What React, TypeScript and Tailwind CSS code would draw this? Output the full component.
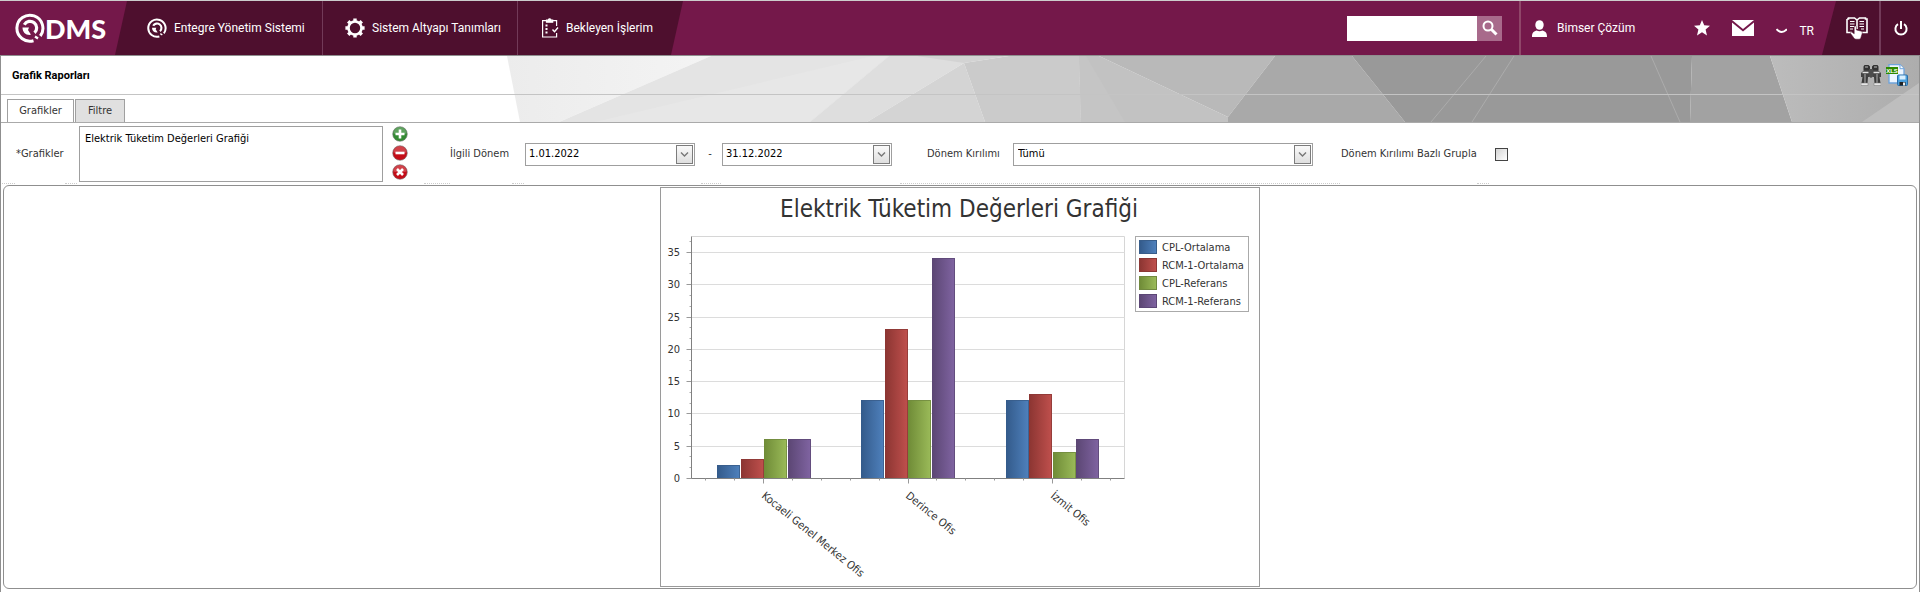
import React from 'react';

const series = [
  { name: 'CPL-Ortalama', from: '#335a8a', to: '#4f81bd', edge: '#385d8a', values: [2, 12, 12] },
  { name: 'RCM-1-Ortalama', from: '#8b3532', to: '#c0504d', edge: '#8c3836', values: [3, 23, 13] },
  { name: 'CPL-Referans', from: '#6f8b37', to: '#9bbb59', edge: '#71893f', values: [6, 12, 4] },
  { name: 'RCM-1-Referans', from: '#5b4673', to: '#8064a2', edge: '#5c4776', values: [6, 34, 6] },
];

const categories = ['Kocaeli Genel Merkez Ofis', 'Derince Ofis', 'İzmit Ofis'];

const plot = { left: 31, right: 464, top: 49, bottom: 291 };
const unit = 6.46;
const slot = (plot.right - plot.left) / categories.length;

const QMark = ({ className }: { className?: string }) => (
  <svg viewBox="0 0 30 30" className={className} fill="none" stroke="white">
    <path d="M18.500 27.700A13 13 0 1 1 25.300 23" strokeWidth="3" />
    <path d="M9.300 11.700A6.600 6.600 0 1 1 19.500 19.800" strokeWidth="3.200" />
    <path d="M7.500 14.500H14l-1 2.500 3 4.800C11 22.500 7.500 19.500 7.500 14.500z" fill="white" stroke="none" />
    <path d="M20 23.500l3 2" strokeWidth="2.200" />
  </svg>
);

const GearIcon = () => (
  <svg viewBox="0 0 20 20" className="h-5 w-5" fill="none" stroke="white">
    <circle cx="10" cy="10" r="6.500" strokeWidth="2.600" />
    {[0, 45, 90, 135, 180, 225, 270, 315].map((a) => (
      <path key={a} d="M8.300 .4h3.400v2.600h-3.400z" fill="white" stroke="none" transform={`rotate(${a} 10 10)`} />
    ))}
  </svg>
);

const TaskIcon = () => (
  <svg viewBox="0 0 18 20" className="h-5 w-[18px]" fill="none" stroke="white" strokeWidth="1.200">
    <path d="M5 2.600H1.600v16.400h14V15M15.600 8V2.600H12" />
    <path d="M5.500 2.200h1.700a1.400 1.400 0 0 1 2.800 0h1.700v2H5.500z" fill="white" />
    <path d="M4.500 7.500h2M4.500 11h2M4.500 14.500h2" strokeWidth="1.800" />
    <path d="M11.500 11.500l2 2.200L17 9.500" strokeWidth="1.400" />
  </svg>
);

const BookIcon = () => (
  <svg viewBox="0 0 22 23" className="h-[23px] w-[22px]">
    <path d="M1 2h1.500V1h6L11 3l2.500-2h6v1H21v13.500h-6M1 2v13.500h5M11 3v9" fill="none" stroke="white" strokeWidth="1.600" />
    <path d="M4 4.500h4.500M4 7h4.500M4 9.500h4.500M4 12h3M13.500 4.500H18M13.500 7H18M13.500 9.500H18M15 12h3" stroke="white" strokeWidth="1.200" />
    <path d="M8.200 10c0-1.500 2.200-1.500 2.200 0v3l5 1.200c1 .4.900 1.500.7 2.500l-1.100 3.500c-.3 1.500-1 2-2.500 2H10c-1.500 0-2-1-3-2.500L4.600 16.500c-.5-1.300.8-1.800 1.800-1l1.800 1.300z" fill="white" stroke="#4e0f2e" strokeWidth=".5" />
  </svg>
);

const BinocularsIcon = () => (
  <svg viewBox="0 0 20 21" className="h-[21px] w-5">
    <path d="M3.500 0h4l1.500 1.500v3.500H2.500v-3.500zM12.500 0h4l1 1.500V5H11V1.500z" fill="#333" />
    <path d="M4 2h3M13 2h3" stroke="#bbb" />
    <path d="M3 5h5.500v7H0V8zM11.500 5H17l3 3v4h-8.500z" fill="#444" />
    <path d="M8 4h4v7.500l-2 1.500-2-1.500z" fill="#4c4c4c" />
    <path d="M1.500 7.500h6M12.500 7.500h6" stroke="#e2e2e2" strokeWidth="1.400" />
    <path d="M1.500 12H7l-.5 6H.5zM13 12h5.500l1 6h-6z" fill="#3c3c3c" />
    <path d="M4 9v9M16 9v9" stroke="#999" strokeWidth="1.300" />
    <path d="M0 18h7v2.500H0zM13 18h7v2.500h-7z" fill="#e6e6e6" stroke="#777" strokeWidth=".5" />
  </svg>
);

const XlsIcon = () => (
  <svg viewBox="0 0 22 22" className="h-[22px] w-[22px]">
    <path d="M3 .7h11l4 4V19H3z" fill="#eef6ff" stroke="#6fa4dc" strokeWidth="1.300" />
    <path d="M14 .7v4h4" fill="#fff" stroke="#6fa4dc" />
    <rect x="0" y="3" width="12" height="7" fill="#2f8a00" />
    <text x="6" y="9" textAnchor="middle" fill="white" fontSize="6" fontWeight="700" fontFamily="Liberation Sans, sans-serif">XLS</text>
    <rect x="11.500" y="11" width="10" height="10.500" rx="1" fill="#4a9fdc" stroke="#2b6ea8" />
    <path d="M13.500 11.500h6v4h-6z" fill="#d8efff" />
    <path d="M13.500 18h6v3.500h-6z" fill="#222" />
    <path d="M17 18.500h2v3h-2z" fill="#eee" />
  </svg>
);

const RoundIcon = ({ color, path }: { color: string; path: string }) => (
  <svg viewBox="0 0 16 16" className="h-4 w-4">
    <circle cx="8" cy="8" r="7.300" fill={color} stroke="#777" strokeOpacity=".6" />
    <path d="M1.500 7.500a6.500 6.500 0 0 1 13 0q-6.500 2-13 0z" fill="white" fillOpacity=".22" />
    <path d={path} stroke="white" strokeWidth="2.600" />
  </svg>
);

const ArrowBox = () => (
  <svg viewBox="0 0 17 19" className="h-full w-[17px]">
    <defs>
      <linearGradient id="arrowFill" x2="0" y2="1">
        <stop stopColor="#fafafa" />
        <stop offset="1" stopColor="#dedede" />
      </linearGradient>
    </defs>
    <rect x=".5" y=".5" width="16" height="18" fill="url(#arrowFill)" stroke="#7c7c7c" />
    <path d="M5 7.500l3.500 3.500L12 7.500" fill="none" stroke="#777" strokeWidth="1.400" />
  </svg>
);

const HeaderPattern = () => (
  <svg
    viewBox="508 0 1412 66"
    preserveAspectRatio="xMaxYMin slice"
    className="absolute top-0 right-0 h-[66px] w-[1412px]"
    aria-hidden="true"
  >
    <defs>
      <linearGradient id="facetLight">
        <stop stopColor="#ececec" />
        <stop offset="1" stopColor="#f4f4f4" />
      </linearGradient>
      <linearGradient id="facetRight">
        <stop stopColor="#bcbcbc" />
        <stop offset="1" stopColor="#adadad" />
      </linearGradient>
    </defs>
    <path d="M508 0h204L560 66h-39z" fill="url(#facetLight)" />
    <path d="M712 0h178L811 66H560z" fill="#e4e4e4" />
    <path d="M874 0h16l-79 66H596z" fill="#e7e7e7" />
    <path d="M890 0h75v7l-97 59h-57z" fill="#dedede" />
    <path d="M918 0h92l-45 7z" fill="#d3d3d3" />
    <path d="M965 7l21 59H868z" fill="#d4d4d4" />
    <path d="M965 7l45-7h70l2 66h-96z" fill="#cbcbcb" />
    <path d="M1080 0h20l129 61v5h-147z" fill="#c2c2c2" />
    <path d="M1080 0h7l39 66h-44z" fill="#c5c5c5" />
    <path d="M1100 0h176l-47 61z" fill="#b9b9b9" />
    <path d="M1276 0h77l53 66h-177v-5z" fill="#a9a9a9" />
    <path d="M1353 0h340l-2 66h-285z" fill="#999" />
    <path d="M1693 0h78l22 66h-102z" fill="#a2a2a2" />
    <path d="M1771 0h149v66h-127z" fill="url(#facetRight)" />
    <path d="M1920 27v39h-57z" fill="#bebebe" />
    <path d="M1487 0l-55 66M1515 0l-42 66M1652 0l29 66" stroke="#acacac" />
  </svg>
);

const NavItem = ({ icon, label, className }: { icon: React.ReactNode; label: string; className: string }) => (
  <a href="#" className={`flex h-full items-center gap-[7px] text-xs text-white ${className}`}>
    {icon}
    {label}
  </a>
);

const DateBox = ({ label, value }: { label: string; value: string }) => (
  <div className="flex h-[23px] w-[170px] border border-[#9f9f9f] bg-white p-px">
    <input
      type="text"
      aria-label={label}
      defaultValue={value}
      className="min-w-0 flex-1 px-[2px] text-black outline-none"
    />
    <button type="button" aria-label="Takvim">
      <ArrowBox />
    </button>
  </div>
);

const Chart = () => {
  const y = (v: number) => Math.round(plot.bottom - v * unit);
  const minorY = Array.from({ length: 23 }, (_, i) => i).filter((i) => i % 3 !== 0);

  return (
    <svg
      viewBox="1 1 598 398"
      className="h-[400px] w-[600px] border border-[#9a9a9a] bg-white"
      fill="#333"
    >
      <defs>
        {series.map((s, i) => (
          <linearGradient key={s.name} id={`bar${i}`}>
            <stop stopColor={s.from} />
            <stop offset="1" stopColor={s.to} />
          </linearGradient>
        ))}
      </defs>

      <text x="299" y="30" fontSize="24" textAnchor="middle">
        Elektrik Tüketim Değerleri Grafiği
      </text>

      {/* Grid and value axis */}
      <g transform="translate(.5 .5)">
        <path d={`M${plot.left} ${plot.top}H${plot.right}V${plot.bottom}`} fill="none" stroke="#d6d6d6" />
        {[5, 10, 15, 20, 25, 30, 35].map((v) => (
          <path key={v} d={`M${plot.left} ${y(v)}H${plot.right}`} stroke="#dcdcdc" />
        ))}
        {[0, 5, 10, 15, 20, 25, 30, 35].map((v) => (
          <path key={v} d={`M${plot.left - 5} ${y(v)}h5`} stroke="#999" />
        ))}
        {minorY.map((i) => (
          <path key={i} d={`M${plot.left - 2} ${y((i * 5) / 3)}h2`} stroke="#aaa" />
        ))}
      </g>
      {[0, 5, 10, 15, 20, 25, 30, 35].map((v) => (
        <text key={v} x="20" y={y(v) + 4} textAnchor="end">
          {v}
        </text>
      ))}

      {/* Bars */}
      {categories.map((c, ci) =>
        series.map((s, si) => {
          const x = Math.round(57 + ci * slot + si * 23.5);
          const top = y(s.values[ci]);
          return (
            <g key={c + s.name}>
              <rect x={x} y={top} width="23" height={plot.bottom - top} fill={`url(#bar${si})`} />
              <path
                d={`M${x} ${top}h22v${plot.bottom - top}`}
                transform="translate(.5 .5)"
                fill="none"
                stroke={s.edge}
                strokeOpacity=".8"
              />
            </g>
          );
        }),
      )}

      {/* Category axis */}
      <g transform="translate(.5 .5)">
        <path d={`M${plot.left} ${plot.top}V${plot.bottom}H${plot.right}`} fill="none" stroke="#808080" />
        {Array.from({ length: 15 }, (_, i) => (
          <path
            key={i}
            d={`M${Math.round(plot.left + ((i + 0.5) * slot) / 5)} ${plot.bottom}v${i % 5 === 2 ? 5 : 2}`}
            stroke="#999"
          />
        ))}
      </g>
      {categories.map((c, i) => (
        <text key={c} transform={`translate(${Math.round(101 + i * slot)} 310) rotate(39)`}>
          {c}
        </text>
      ))}

      {/* Legend */}
      <rect x="475.5" y="49.5" width="113" height="75" fill="white" stroke="#aaa" />
      {series.map((s, i) => (
        <g key={s.name}>
          <rect x="479.5" y={53.5 + i * 18} width="17" height="13" fill={`url(#bar${i})`} stroke={s.edge} />
          <text x="502" y={64 + i * 18}>
            {s.name}
          </text>
        </g>
      ))}
    </svg>
  );
};

const App = () => {
  return (
    <div className="flex min-h-screen flex-col bg-white font-['DejaVu_Sans_Condensed','DejaVu_Sans',sans-serif] text-[11px] text-[#333]">
      {/* Top bar */}
      <header className="flex h-14 items-center border-t border-b border-t-[#ccc] border-b-[#8f8f8f] bg-[#74184a] font-['Roboto','Noto_Sans',sans-serif] text-white">
        <a href="#" aria-label="QDMS" className="flex w-[115px] items-center pl-[15px]">
          <QMark className="h-[30px] w-[30px]" />
          <span className="font-['Lato',sans-serif] text-[27px] leading-none font-black">DMS</span>
        </a>
        <nav className="flex h-full w-[568px] bg-[#4e0f2e] [clip-path:polygon(12px_0,100%_0,calc(100%-12px)_100%,0_100%)]">
          <NavItem icon={<QMark className="h-5 w-5" />} label="Entegre Yönetim Sistemi" className="w-[208px] border-r border-[#723a58] pl-8" />
          <NavItem icon={<GearIcon />} label="Sistem Altyapı Tanımları" className="w-[195px] border-r border-[#723a58] pl-[22px]" />
          <NavItem icon={<TaskIcon />} label="Bekleyen İşlerim" className="flex-1 pl-[23px]" />
        </nav>

        <div className="ml-auto flex h-full items-center">
          <form className="flex h-[25px]">
            <input type="search" aria-label="Ara" className="w-[130px] bg-white px-1 text-black outline-none" />
            <button type="button" aria-label="Ara" className="flex w-[25px] items-center justify-center bg-[#a86a8b]">
              <svg viewBox="0 0 16 16" className="h-4 w-4" fill="none" stroke="white">
                <circle cx="6" cy="6" r="4.500" strokeWidth="2" />
                <path d="M9.500 9.500l5 5" strokeWidth="3" />
              </svg>
            </button>
          </form>
          <div className="ml-[17px] flex h-full w-[175px] items-center gap-[10px] border-l-2 border-[#904669] pl-[11px] text-xs">
            <svg viewBox="0 0 15 17" className="h-[17px] w-[15px]" fill="white">
              <ellipse cx="7.500" cy="5" rx="4.200" ry="4.800" />
              <path d="M0 17c0-4 1-5.500 4.500-6.500q3 1.500 6 0C14 11.500 15 13 15 17z" />
            </svg>
            Bimser Çözüm
          </div>
          <button type="button" aria-label="Favoriler" className="w-4">
            <svg viewBox="0 0 16 16" className="h-4 w-4" fill="white">
              <path d="M8 0l2.200 5.300 5.800.5-4.400 3.800L13 15.500 8 12.300 3 15.500l1.400-5.900L0 5.800l5.800-.5z" />
            </svg>
          </button>
          <button type="button" aria-label="Mesajlar" className="ml-[22px]">
            <svg viewBox="0 0 22 16" className="h-4 w-[22px]" fill="white">
              <path d="M0 0h22L11 9zM0 2.500l11 9 11-9V16H0z" />
            </svg>
          </button>
          <button type="button" className="ml-[22px] flex w-[38px] items-center gap-3 pt-[5px] text-xs">
            <svg viewBox="0 0 12 6" className="h-[6px] w-3" fill="none" stroke="white" strokeWidth="2.200">
              <path d="M.5 1q5.500 6 11 0" />
            </svg>
            TR
          </button>
          <div className="ml-2 flex h-full w-[98px] bg-[#4e0f2e] [clip-path:polygon(14px_0,100%_0,100%_100%,0_100%)]">
            <button type="button" aria-label="Yardım" className="flex w-[59px] items-center justify-end border-r-2 border-[#723a58] pr-[11px]">
              <BookIcon />
            </button>
            <button type="button" aria-label="Çıkış" className="flex flex-1 items-center justify-center">
              <svg viewBox="0 0 14 15" className="h-[15px] w-[14px]" fill="none" stroke="white" strokeWidth="2">
                <path d="M4 3.200a5.600 5.600 0 1 0 6 0M7 0v8" />
              </svg>
            </button>
          </div>
        </div>
      </header>

      <main className="flex flex-1 flex-col border-r border-l border-[#8f8f8f]">
        {/* Title and tabs */}
        <div className="relative overflow-hidden border-b border-[#aaa]">
          <HeaderPattern />
          <div className="relative flex h-[39px] items-center justify-between border-b border-[#c4c4c4] pr-[11px] pl-[11px]">
            <h1 className="pt-[2px] font-['Roboto','Noto_Sans',sans-serif] font-bold text-black">Grafik Raporları</h1>
            <div className="flex gap-[5px]">
              <button type="button" aria-label="Ara">
                <BinocularsIcon />
              </button>
              <button type="button" aria-label="Excel">
                <XlsIcon />
              </button>
            </div>
          </div>
          <div className="relative flex h-[27px] items-end gap-px pl-[6px]">
            <button type="button" className="h-[23px] w-[67px] border border-b-0 border-[#a0a0a0] bg-white pt-px">
              Grafikler
            </button>
            <button type="button" className="h-[23px] w-[50px] border border-b-0 border-[#a0a0a0] bg-[#e0e0e0] pt-px">
              Filtre
            </button>
          </div>
        </div>

        {/* Filters */}
        <div className="flex h-[60px] items-center pt-[2px]">
          <label htmlFor="grafikler" className="w-[78px] pl-[15px]">
            *Grafikler
          </label>
          <select
            id="grafikler"
            size={3}
            className="h-[56px] w-[304px] border border-[#9f9f9f] bg-white px-1 py-[5px] text-black outline-none"
          >
            <option className="px-px">Elektrik Tüketim Değerleri Grafiği</option>
          </select>
          <div className="mb-[2px] ml-[9px] flex flex-col gap-[3px]">
            <button type="button" aria-label="Ekle">
              <RoundIcon color="#338a33" path="M8 3.500v9M3.500 8h9" />
            </button>
            <button type="button" aria-label="Çıkar">
              <RoundIcon color="#c40d18" path="M3.500 8h9" />
            </button>
            <button type="button" aria-label="Temizle">
              <RoundIcon color="#c40d18" path="M5 5l6 6M11 5l-6 6" />
            </button>
          </div>
          <span className="ml-[42px] w-[75px]">İlgili Dönem</span>
          <DateBox label="İlgili Dönem başlangıç" value="1.01.2022" />
          <span className="w-[27px] pl-[3px] text-center">-</span>
          <DateBox label="İlgili Dönem bitiş" value="31.12.2022" />
          <label htmlFor="kirilim" className="ml-[35px] w-[86px]">
            Dönem Kırılımı
          </label>
          <div className="relative h-[23px] w-[300px]">
            <select
              id="kirilim"
              className="h-full w-full appearance-none border border-[#9f9f9f] bg-white px-1 text-black outline-none"
            >
              <option>Tümü</option>
            </select>
            <span className="pointer-events-none absolute top-[2px] right-[2px] h-[19px]">
              <ArrowBox />
            </span>
          </div>
          <label htmlFor="grupla" className="ml-7 w-[154px]">
            Dönem Kırılımı Bazlı Grupla
          </label>
          <input
            id="grupla"
            type="checkbox"
            className="h-[13px] w-[13px] appearance-none border border-[#444] bg-linear-to-br from-[#d4d4d4] to-white"
          />
        </div>
        <div className="flex h-[2px] [&>i]:border-t [&>i]:border-dotted [&>i]:border-[#ccc]">
          <i className="ml-px w-[13px]" />
          <i className="ml-[50px] w-3" />
          <i className="ml-[347px] w-[26px]" />
          <i className="ml-[62px] w-3" />
          <i className="ml-[177px] w-5" />
          <i className="ml-[179px] w-[440px]" />
          <i className="ml-[137px] w-3" />
        </div>

        {/* Report area */}
        <section className="mx-[2px] flex h-[404px] justify-center rounded-md border border-[#8f8f8f] pt-px">
          <Chart />
        </section>
      </main>
    </div>
  );
};

export default App;
